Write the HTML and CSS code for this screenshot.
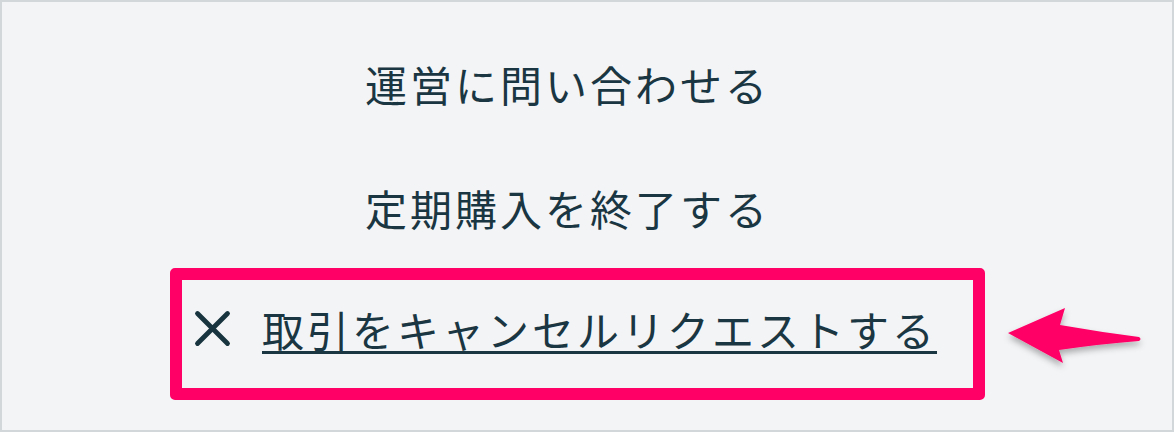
FILE: index.html
```html
<!DOCTYPE html>
<html lang="ja">
<head>
<meta charset="utf-8">
<link rel="stylesheet" href="styles.css">
</head>
<body>
<div class="frame">
  <div class="item item-first">運営に問い合わせる</div>
  <div class="item item-second">定期購入を終了する</div>
  <div class="cancel-row">
    <div class="highlight">
      <svg class="x-icon" width="37" height="37" viewBox="0 0 37 37" aria-hidden="true">
        <path d="M3.5 3.5 L33.5 33.5 M33.5 3.5 L3.5 33.5" stroke="#18343e" stroke-width="4.8" stroke-linecap="round" fill="none"/>
      </svg>
      <span class="cancel-link">取引をキャンセルリクエストする</span>
    </div>
    <svg class="arrow" width="150" height="132" viewBox="0 0 150 132" aria-hidden="true">
      <defs>
        <filter id="sh" x="-20%" y="-40%" width="140%" height="180%">
          <feDropShadow dx="0" dy="4" stdDeviation="3" flood-color="#000" flood-opacity="0.3"/>
        </filter>
      </defs>
      <path d="M8 65 L65 40 L60 57 Q100 64 139 69 Q142 71 139 73 Q100 76 59 82 L63 95 Z" fill="#fe0066" filter="url(#sh)"/>
    </svg>
  </div>
</div>
</body>
</html>
```

FILE: styles.css
```css
html, body {
  margin: 0;
  padding: 0;
}
body {
  background: #f3f4f6;
}
.frame {
  box-sizing: border-box;
  width: 1174px;
  height: 432px;
  border: 2px solid #d2d7da;
  background: #f3f4f6;
  padding-top: 61px;
  display: flex;
  flex-direction: column;
  align-items: flex-start;
  font-family: "Noto Sans CJK JP", "Noto Sans", sans-serif;
  color: #1a3642;
  overflow: hidden;
}
.item {
  font-size: 42px;
  line-height: 42px;
  height: 42px;
  letter-spacing: 3px;
  margin-left: 363px;
  white-space: nowrap;
}
.item-second {
  margin-top: 82px;
}
.cancel-row {
  margin-top: 39px;
  margin-left: 168px;
  display: flex;
  align-items: stretch;
  gap: 15px;
}
.highlight {
  box-sizing: border-box;
  width: 815px;
  border: 12.5px solid #fe0066;
  border-radius: 5px;
  padding: 27px 0 38px 12px;
  display: flex;
  align-items: center;
  gap: 31px;
}
.x-icon {
  display: block;
  flex: none;
}
.cancel-link {
  font-size: 42px;
  line-height: 42px;
  height: 42px;
  letter-spacing: 3px;
  white-space: nowrap;
  text-decoration: underline;
  text-decoration-thickness: 2.5px;
  text-underline-offset: 4px;
  text-decoration-color: #1a3642;
}
.arrow {
  display: block;
  flex: none;
}
```
